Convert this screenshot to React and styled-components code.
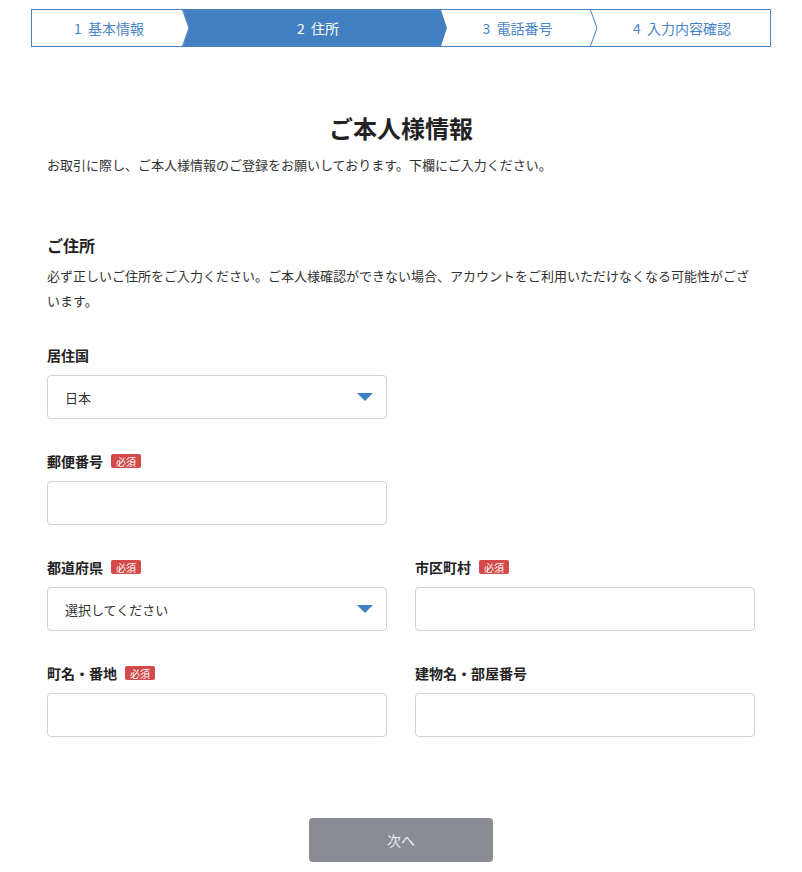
import styled, { createGlobalStyle } from 'styled-components'

const GlobalStyle = createGlobalStyle`
  body {
    margin: 0;
    background: #fff;
    font-family: "Noto Sans CJK JP", "Noto Sans", sans-serif;
    color: #333;
  }
`

const steps = [
  { num: '1', label: '基本情報', width: 151 },
  { num: '2', label: '住所', width: 258, active: true },
  { num: '3', label: '電話番号', width: 150 },
  { num: '4', label: '入力内容確認' }
]

const Chevron = () => (
  <ChevronSvg width="8" height="36" viewBox="0 0 8 36">
    <polyline points="0.5,0 7,18 0.5,36" fill="none" stroke="#4a82c3" strokeWidth="1" />
  </ChevronSvg>
)

const Arrow = () => (
  <ArrowSvg width="16" height="8" viewBox="0 0 16 8">
    <polygon points="0,0 16,0 8,8" fill="#3f7fc4" />
  </ArrowSvg>
)

const Required = () => <Badge>必須</Badge>

const Field = ({ label, required, select, value }) => (
  <FieldWrap>
    <Label>
      {label}
      {required && <Required />}
    </Label>
    {select ? (
      <SelectBox>
        <span>{value}</span>
        <Arrow />
      </SelectBox>
    ) : (
      <Input />
    )}
  </FieldWrap>
)

const App = () => (
  <Page>
    <GlobalStyle />
    <Stepper>
      {steps.map((s, i) => (
        <Step key={s.label} $active={s.active} $width={s.width}>
          <StepNum>{s.num}</StepNum>
          {s.label}
          {!s.active && i < steps.length - 1 && <Chevron />}
        </Step>
      ))}
    </Stepper>
    <Content>
      <Title>ご本人様情報</Title>
      <Lead>お取引に際し、ご本人様情報のご登録をお願いしております。下欄にご入力ください。</Lead>
      <SectionTitle>ご住所</SectionTitle>
      <Note>
        必ず正しいご住所をご入力ください。ご本人様確認ができない場合、アカウントをご利用いただけなくなる可能性がございます。
      </Note>
      <Form>
        <Field label="居住国" select value="日本" />
        <div />
        <Field label="郵便番号" required />
        <div />
        <Field label="都道府県" required select value="選択してください" />
        <Field label="市区町村" required />
        <Field label="町名・番地" required />
        <Field label="建物名・部屋番号" />
      </Form>
      <ButtonRow>
        <NextButton>次へ</NextButton>
      </ButtonRow>
    </Content>
  </Page>
)

export default App

const Page = styled.div`
  padding: 9px 0 10px;
  width: 802px;
`

const Stepper = styled.div`
  margin: 0 auto;
  width: 740px;
  height: 38px;
  box-sizing: border-box;
  border: 1px solid #4a82c3;
  display: flex;
`

const Step = styled.div`
  position: relative;
  flex: ${props => (props.$width ? `0 0 ${props.$width}px` : '1 1 auto')};
  height: 36px;
  display: flex;
  align-items: center;
  justify-content: center;
  padding-left: ${props => (props.$active ? '6px' : '3px')};
  box-sizing: border-box;
  font-size: 14px;
  color: ${props => (props.$active ? '#fff' : '#4a86c6')};
  background: ${props => (props.$active ? '#4280c2' : 'transparent')};
  ${props =>
    props.$active &&
    `
    margin-right: -6px;
    flex-basis: ${props.$width + 6}px;
    clip-path: polygon(0 0, calc(100% - 6px) 0, 100% 50%, calc(100% - 6px) 100%, 0 100%, 6px 50%);
    z-index: 1;
  `}
`

const StepNum = styled.span`
  margin-right: 6px;
`

const ChevronSvg = styled.svg`
  position: absolute;
  right: -7px;
  top: 0;
`

const Content = styled.div`
  width: 708px;
  margin: 0 auto;
`

const Title = styled.h1`
  margin: 65px 0 0;
  text-align: center;
  font-size: 24px;
  line-height: 32px;
  font-weight: bold;
  color: #222;
`

const Lead = styled.p`
  margin: 8px 0 0;
  font-size: 13px;
  line-height: 25px;
  color: #333;
`

const SectionTitle = styled.h2`
  margin: 56px 0 0;
  font-size: 16px;
  line-height: 24px;
  font-weight: bold;
  color: #222;
`

const Note = styled.p`
  margin: 6px 0 0;
  font-size: 13px;
  line-height: 25px;
  color: #333;
`

const Form = styled.div`
  margin-top: 32px;
  display: grid;
  grid-template-columns: 340px 340px;
  column-gap: 28px;
  row-gap: 32px;
`

const FieldWrap = styled.div`
  display: flex;
  flex-direction: column;
`

const Label = styled.div`
  display: flex;
  align-items: center;
  gap: 8px;
  height: 20px;
  margin-bottom: 10px;
  font-size: 14px;
  font-weight: bold;
  color: #222;
`

const Badge = styled.span`
  display: inline-flex;
  align-items: center;
  height: 14px;
  padding: 0 5px;
  border-radius: 2px;
  background: #d24a4a;
  color: #fff;
  font-size: 10px;
  font-weight: normal;
`

const SelectBox = styled.div`
  height: 44px;
  box-sizing: border-box;
  border: 1px solid #d2d2d2;
  border-radius: 4px;
  display: flex;
  align-items: center;
  justify-content: space-between;
  padding: 0 13px 0 17px;
  font-size: 13px;
  color: #333;
`

const ArrowSvg = styled.svg`
  display: block;
`

const Input = styled.div`
  height: 44px;
  box-sizing: border-box;
  border: 1px solid #d2d2d2;
  border-radius: 4px;
  background: #fff;
`

const ButtonRow = styled.div`
  display: flex;
  justify-content: center;
  margin-top: 81px;
`

const NextButton = styled.button`
  width: 184px;
  height: 44px;
  border: none;
  border-radius: 4px;
  background: #898c92;
  color: #eef0f2;
  font-family: "Noto Sans CJK JP", sans-serif;
  font-size: 14px;
`
